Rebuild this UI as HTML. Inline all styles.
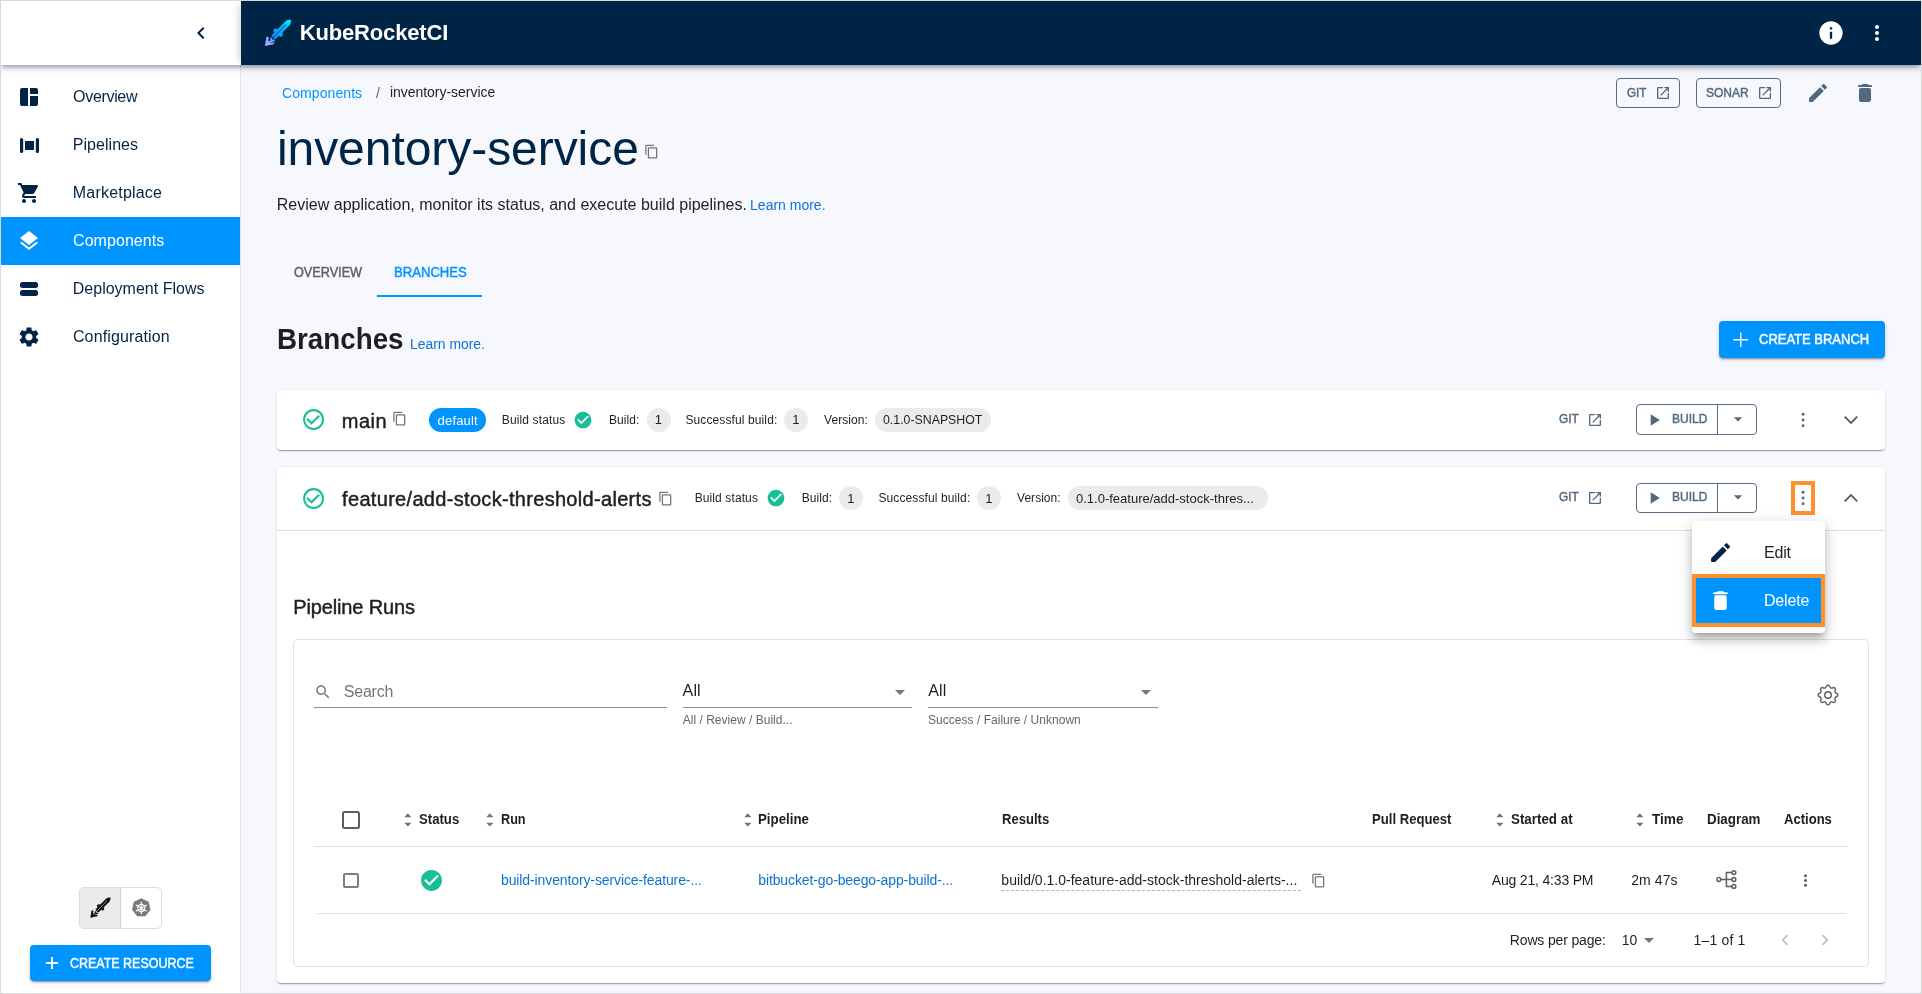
<!DOCTYPE html>
<html lang="en">
<head>
<meta charset="utf-8">
<title>KubeRocketCI - inventory-service</title>
<style>
*{box-sizing:border-box;margin:0;padding:0}
html,body{width:1922px;height:994px;overflow:hidden;background:#f7f8fd}
body{font-family:"Liberation Sans",sans-serif;position:relative;color:#1f1f1f}
.a{position:absolute}
.t{position:absolute;white-space:nowrap;line-height:1;font-weight:400}
.tl{position:absolute;left:0;top:0;width:1922px;height:994px;will-change:transform}
.t{transform-origin:0 50%}
.m{-webkit-text-stroke:.45px currentColor}
.b{font-weight:700}
svg{position:absolute;display:block;overflow:visible}
.card{position:absolute;background:#fff;border-radius:4px;box-shadow:0 2px 1px -1px rgba(0,0,0,.2),0 1px 1px 0 rgba(0,0,0,.14),0 1px 3px 0 rgba(0,0,0,.12)}
.chip{position:absolute;height:24px;border-radius:12px;background:#ebebeb}
.obtn{position:absolute;border:1px solid #566c84;border-radius:4px;height:30px}
.cbtn{position:absolute;background:#0094ff;border-radius:4px;box-shadow:0 3px 1px -2px rgba(0,0,0,.2),0 2px 2px 0 rgba(0,0,0,.14),0 1px 5px 0 rgba(0,0,0,.12)}
.ln{position:absolute;height:1px;background:#e0e0e0}
</style>
</head>
<body>
<!-- sidebar -->
<div class="a" style="left:1px;top:1px;width:240px;height:992px;background:#fff;border-right:1px solid #e2e2e2"></div>
<div class="a" style="left:1px;top:217px;width:239px;height:48px;background:#0094ff"></div>
<!-- top bar -->
<div class="a" style="left:1px;top:1px;width:1920px;height:64px;background:#fff;box-shadow:0 2px 4px -1px rgba(0,30,64,.3),0 4px 5px 0 rgba(0,30,64,.15),0 1px 10px 0 rgba(0,30,64,.13)"></div>
<div class="a" style="left:241px;top:1px;width:1680px;height:64px;background:#002446;box-shadow:-5px 0 8px -4px rgba(0,0,0,.22)"></div>
<!-- sidebar collapse chevron -->
<svg style="left:189px;top:21px" width="24" height="24" viewBox="0 0 24 24"><path fill="#002446" d="M15.41 7.41L14 6l-6 6 6 6 1.41-1.41L10.83 12z"/></svg>
<!-- logo -->
<svg style="left:258px;top:14px" width="40" height="38" viewBox="0 0 40 38"><defs><linearGradient id="lg" x1="0" y1="0" x2="26" y2="0" gradientUnits="userSpaceOnUse"><stop offset="0" stop-color="#00f0ff"/><stop offset=".5" stop-color="#08b4ff"/><stop offset="1" stop-color="#1a8cff"/></linearGradient><linearGradient id="lg2" x1="17" y1="23" x2="7" y2="32" gradientUnits="userSpaceOnUse"><stop offset="0" stop-color="#4a9cff"/><stop offset=".5" stop-color="#8f9fff"/><stop offset="1" stop-color="#c2a6ff"/></linearGradient></defs><g transform="translate(33.1 5.700) rotate(135)"><path fill="url(#lg)" d="M.3 0C1.200 1.300 2.800 2.500 5 2.800L25 2.800 25.500 0 25-2.800 5-2.800C2.800-2.500 1.200-1.300 .3 0Z"/><path fill="url(#lg)" d="M15.600 2.600L17.800 5.200 20.600 4.800 21 2.600ZM14.600-2.600L16.800-5.200 19.600-4.800 20-2.600Z"/><path stroke="#002446" stroke-width=".95" stroke-dasharray="1.150 .65" fill="none" d="M7.200 0H24.800"/></g><path fill="url(#lg2)" d="M6.900 31.900L8.400 22.800 10.800 22.800 10.500 27 12.300 27 12.500 23.500 14.200 23.500 14 25.600 16.800 25.400 16.800 27.200 11.400 28.500 16.400 28.400 15.900 30.200Z"/></svg>
<!-- header right icons -->
<svg style="left:1817px;top:19px" width="28" height="28" viewBox="0 0 24 24"><path fill="#fff" d="M12 2C6.480 2 2 6.480 2 12s4.480 10 10 10 10-4.480 10-10S17.520 2 12 2zm1 15h-2v-6h2v6zm0-8h-2V7h2v2z"/></svg>
<svg style="left:1865px;top:21px" width="24" height="24" viewBox="0 0 24 24"><path fill="#fff" d="M12 8c1.100 0 2-.9 2-2s-.9-2-2-2-2 .9-2 2 .9 2 2 2zm0 2c-1.100 0-2 .9-2 2s.9 2 2 2 2-.9 2-2-.9-2-2-2zm0 6c-1.100 0-2 .9-2 2s.9 2 2 2 2-.9 2-2-.9-2-2-2z"/></svg>
<!-- sidebar icons -->
<svg style="left:20px;top:88px" width="18" height="18" viewBox="0 0 18 18"><path fill="#002446" d="M2 0h6v18H2a2 2 0 0 1-2-2V2a2 2 0 0 1 2-2zM10 0h6a2 2 0 0 1 2 2v4h-8zM10 8h8v8a2 2 0 0 1-2 2h-6z"/></svg>
<svg style="left:19.500px;top:137.500px" width="19" height="15" viewBox="0 0 19 15"><path fill="#002446" d="M1.600 0A1.600 1.600 0 0 1 3.200 1.600v11.800a1.600 1.600 0 0 1-3.200 0V1.600A1.600 1.600 0 0 1 1.600 0zM17.400 0A1.600 1.600 0 0 1 19 1.600v11.800a1.600 1.600 0 0 1-3.200 0V1.600A1.600 1.600 0 0 1 17.400 0zM5 3h9v9H5z"/></svg>
<svg style="left:17px;top:181px" width="24" height="24" viewBox="0 0 24 24"><path fill="#002446" d="M7 18c-1.100 0-1.990.9-1.990 2S5.900 22 7 22s2-.9 2-2-.9-2-2-2zM1 2v2h2l3.600 7.590-1.350 2.450c-.16.280-.25.610-.25.960 0 1.100.9 2 2 2h12v-2H7.420c-.14 0-.25-.11-.25-.25l.03-.12.900-1.630h7.450c.75 0 1.410-.41 1.750-1.030l3.580-6.490c.08-.14.120-.31.120-.48 0-.55-.45-1-1-1H5.210l-.94-2H1zm16 16c-1.100 0-1.990.9-1.990 2s.89 2 1.990 2 2-.9 2-2-.9-2-2-2z"/></svg>
<svg style="left:17px;top:229px" width="24" height="24" viewBox="0 0 24 24"><path fill="#fff" d="M11.990 18.540l-7.370-5.730L3 14.070l9 7 9-7-1.630-1.270-7.380 5.740zM12 16l7.360-5.730L21 9l-9-7-9 7 1.630 1.270L12 16z"/></svg>
<div class="a" style="left:20px;top:282px;width:18px;height:6px;border-radius:2.500px;background:#002446"></div>
<div class="a" style="left:20px;top:290px;width:18px;height:6px;border-radius:2.500px;background:#002446"></div>
<svg style="left:17px;top:325px" width="24" height="24" viewBox="0 0 24 24"><path fill="#002446" d="M19.140 12.940c.04-.3.060-.61.060-.94 0-.32-.02-.64-.07-.94l2.030-1.580c.18-.14.230-.41.120-.61l-1.920-3.320c-.12-.22-.37-.29-.59-.22l-2.390.96c-.5-.38-1.030-.7-1.620-.94l-.36-2.540c-.04-.24-.24-.41-.48-.41h-3.840c-.24 0-.43.170-.47.410l-.36 2.540c-.59.240-1.130.57-1.620.94l-2.390-.96c-.22-.08-.47 0-.59.220L2.740 8.870c-.12.210-.08.470.120.610l2.030 1.580c-.05.300-.09.630-.09.940s.02.640.07.940l-2.030 1.580c-.18.140-.23.410-.12.610l1.920 3.320c.12.220.37.290.59.220l2.390-.96c.5.380 1.030.7 1.620.94l.36 2.540c.05.240.24.410.48.410h3.840c.24 0 .44-.17.470-.41l.36-2.540c.59-.24 1.130-.56 1.620-.94l2.390.96c.22.080.47 0 .59-.22l1.920-3.320c.12-.22.070-.47-.12-.61l-2.010-1.580zM12 15.600c-1.980 0-3.600-1.620-3.600-3.600s1.620-3.600 3.600-3.600 3.600 1.620 3.600 3.600-1.620 3.600-3.600 3.600z"/></svg>
<!-- sidebar bottom toggle -->
<div class="a" style="left:79px;top:887px;width:83px;height:42px;border:1px solid #dcdcdc;border-radius:5px;background:#fff"></div>
<div class="a" style="left:80px;top:888px;width:41px;height:40px;background:#ebebeb;border-right:1px solid #d4d4d4;border-radius:4px 0 0 4px"></div>
<svg style="left:84.57px;top:893.3px" width="30.92" height="29.37" viewBox="0 0 40 38"><g transform="translate(33.1 5.700) rotate(135)"><path fill="#111" d="M.3 0C1.200 1.300 2.800 2.500 5 2.800L25 2.800 25.500 0 25-2.800 5-2.800C2.800-2.500 1.200-1.300 .3 0Z"/><path fill="#111" d="M15.600 2.600L17.800 5.200 20.600 4.800 21 2.600ZM14.600-2.600L16.800-5.200 19.600-4.800 20-2.600Z"/><path stroke="#ebebeb" stroke-width=".95" stroke-dasharray="1.150 .65" fill="none" d="M7.200 0H24.800"/></g><path fill="#111" d="M6.900 31.900L8.400 22.800 10.800 22.800 10.500 27 12.300 27 12.500 23.500 14.200 23.500 14 25.600 16.800 25.400 16.800 27.200 11.400 28.500 16.400 28.400 15.900 30.200Z"/></svg>
<svg style="left:130.500px;top:898px" width="20.500" height="20" viewBox="0 0 20.500 20">
<path fill="#7a7a7a" d="M10.250 .3l7.400 3.560 1.830 8-5.120 6.420H6.140L1.020 11.860l1.830-8z"/>
<g stroke="#fff" stroke-width="1.100" fill="none" stroke-linecap="round"><circle cx="10.250" cy="10" r="3.600"/><path d="M10.250 4.300v11.400M5.300 7.200l9.900 5.700M15.200 7.200l-9.900 5.700"/></g>
<circle cx="10.250" cy="10" r="1.300" fill="#fff"/>
</svg>
<!-- create resource button -->
<div class="cbtn" style="left:30px;top:945px;width:181px;height:36px"></div>
<svg style="left:45px;top:956px" width="14" height="14" viewBox="0 0 14 14"><path stroke="#fff" stroke-width="1.900" d="M7 .9v12.200M.9 7h12.200"/></svg>
<!-- top-right buttons -->
<div class="obtn" style="left:1616px;top:78px;width:64px"></div>
<svg style="left:1655px;top:85px" width="16" height="16" viewBox="0 0 24 24"><path fill="#52687f" d="M19 19H5V5h7V3H5c-1.110 0-2 .9-2 2v14c0 1.100.89 2 2 2h14c1.100 0 2-.9 2-2v-7h-2v7zM14 3v2h3.590l-9.830 9.830 1.410 1.410L19 6.410V10h2V3h-7z"/></svg>
<div class="obtn" style="left:1696px;top:78px;width:85px"></div>
<svg style="left:1757.200px;top:85px" width="16" height="16" viewBox="0 0 24 24"><path fill="#52687f" d="M19 19H5V5h7V3H5c-1.110 0-2 .9-2 2v14c0 1.100.89 2 2 2h14c1.100 0 2-.9 2-2v-7h-2v7zM14 3v2h3.590l-9.830 9.830 1.410 1.410L19 6.410V10h2V3h-7z"/></svg>
<svg style="left:1805.500px;top:80.600px" width="24" height="24" viewBox="0 0 24 24"><path fill="#52687f" d="M3 17.460v3.040c0 .28.220.5.500.5h3.040c.13 0 .26-.05.350-.15L17.810 9.940l-3.750-3.750L3.150 17.100c-.10.100-.15.220-.15.360zM20.710 7.040c.39-.39.39-1.020 0-1.410l-2.340-2.340a.996.996 0 0 0-1.410 0l-1.830 1.830 3.750 3.750 1.830-1.830z"/></svg>
<svg style="left:1853px;top:81px" width="24" height="24" viewBox="0 0 24 24"><path fill="#52687f" d="M6 19c0 1.100.9 2 2 2h8c1.100 0 2-.9 2-2V9c0-1.100-.9-2-2-2H8c-1.100 0-2 .9-2 2v10zM18 4h-2.500l-.71-.71c-.18-.18-.44-.29-.70-.29H9.910c-.26 0-.52.110-.70.290L8.500 4H6c-.55 0-1 .45-1 1s.45 1 1 1h12c.55 0 1-.45 1-1s-.45-1-1-1z"/></svg>
<!-- title copy icon -->
<svg style="left:643.700px;top:144.400px" width="15.200" height="15.200" viewBox="0 0 24 24"><path fill="#757575" d="M16 1H4c-1.100 0-2 .9-2 2v14h2V3h12V1zm3 4H8c-1.100 0-2 .9-2 2v14c0 1.100.9 2 2 2h11c1.100 0 2-.9 2-2V7c0-1.100-.9-2-2-2zm0 16H8V7h11v14z"/></svg>
<!-- tab underline -->
<div class="a" style="left:377px;top:295px;width:105px;height:2px;background:#0094ff"></div>
<!-- create branch -->
<div class="cbtn" style="left:1719px;top:321px;width:166px;height:37px"></div>
<svg style="left:1733px;top:331.500px" width="15.500" height="15.500" viewBox="0 0 15.500 15.500"><path stroke="#fff" stroke-width="1.400" d="M7.750 .4v14.700M.4 7.750h14.700"/></svg>
<!-- card 1 -->
<div class="card" style="left:277px;top:390px;width:1608px;height:60.400px"></div>
<svg style="left:300.900px;top:406.900px" width="25.200" height="25.200" viewBox="0 0 24 24"><path fill="#18be94" d="M16.590 7.580L10 14.170l-3.590-3.580L5 12l5 5 8-8zM12 2C6.480 2 2 6.480 2 12s4.480 10 10 10 10-4.480 10-10S17.520 2 12 2zm0 18c-4.420 0-8-3.580-8-8s3.580-8 8-8 8 3.580 8 8-3.580 8-8 8z"/></svg>
<svg style="left:391.700px;top:411.300px" width="15.200" height="15.200" viewBox="0 0 24 24"><path fill="#757575" d="M16 1H4c-1.100 0-2 .9-2 2v14h2V3h12V1zm3 4H8c-1.100 0-2 .9-2 2v14c0 1.100.9 2 2 2h11c1.100 0 2-.9 2-2V7c0-1.100-.9-2-2-2zm0 16H8V7h11v14z"/></svg>
<div class="chip" style="left:429px;top:408px;width:57px;background:#0094ff"></div>
<svg style="left:573.200px;top:410px" width="20" height="20" viewBox="0 0 24 24"><circle cx="12" cy="12" r="8" fill="#fff"/><path fill="#18be94" d="M12 2C6.480 2 2 6.480 2 12s4.480 10 10 10 10-4.480 10-10S17.520 2 12 2zm-2 15l-5-5 1.410-1.410L10 14.170l7.590-7.590L19 8l-9 9z"/></svg>
<div class="chip" style="left:647px;top:408px;width:23.500px"></div>
<div class="chip" style="left:784px;top:408px;width:24px"></div>
<div class="chip" style="left:875px;top:408px;width:116px"></div>
<svg style="left:1587px;top:412px" width="16" height="16" viewBox="0 0 24 24"><path fill="#52687f" d="M19 19H5V5h7V3H5c-1.110 0-2 .9-2 2v14c0 1.100.89 2 2 2h14c1.100 0 2-.9 2-2v-7h-2v7zM14 3v2h3.590l-9.830 9.830 1.410 1.410L19 6.410V10h2V3h-7z"/></svg>
<div class="obtn" style="left:1636px;top:404px;width:121px;height:30.750px"></div>
<div class="a" style="left:1717px;top:404px;width:1px;height:30px;background:#566c84"></div>
<svg style="left:1643.800px;top:410.300px" width="20" height="20" viewBox="0 0 24 24"><path fill="#52687f" d="M8 5v14l11-7z"/></svg>
<svg style="left:1727.500px;top:408.500px" width="20" height="20" viewBox="0 0 24 24"><path fill="#52687f" d="M7 10l5 5 5-5z"/></svg>
<svg style="left:1798px;top:410.700px" width="10" height="18" viewBox="0 0 10 18"><g fill="#52687f"><circle cx="5.100" cy="3.300" r="1.450"/><circle cx="5.100" cy="9" r="1.450"/><circle cx="5.100" cy="14.700" r="1.450"/></g></svg>
<svg style="left:1843px;top:414px" width="16" height="12" viewBox="0 0 16 12"><path fill="none" stroke="#5c5c5c" stroke-width="1.800" d="M1.700 2.700L8 9l6.300-6.300"/></svg>
<!-- card 2 -->
<div class="card" style="left:277px;top:467px;width:1608px;height:516px"></div>
<div class="ln" style="left:277px;top:530px;width:1608px;background:#dedede"></div>
<svg style="left:300.900px;top:485.900px" width="25.200" height="25.200" viewBox="0 0 24 24"><path fill="#18be94" d="M16.590 7.580L10 14.170l-3.590-3.580L5 12l5 5 8-8zM12 2C6.480 2 2 6.480 2 12s4.480 10 10 10 10-4.480 10-10S17.520 2 12 2zm0 18c-4.420 0-8-3.580-8-8s3.580-8 8-8 8 3.580 8 8-3.580 8-8 8z"/></svg>
<svg style="left:657.600px;top:491px" width="15.200" height="15.200" viewBox="0 0 24 24"><path fill="#757575" d="M16 1H4c-1.100 0-2 .9-2 2v14h2V3h12V1zm3 4H8c-1.100 0-2 .9-2 2v14c0 1.100.9 2 2 2h11c1.100 0 2-.9 2-2V7c0-1.100-.9-2-2-2zm0 16H8V7h11v14z"/></svg>
<svg style="left:765.900px;top:488px" width="20" height="20" viewBox="0 0 24 24"><circle cx="12" cy="12" r="8" fill="#fff"/><path fill="#18be94" d="M12 2C6.480 2 2 6.480 2 12s4.480 10 10 10 10-4.480 10-10S17.520 2 12 2zm-2 15l-5-5 1.410-1.410L10 14.170l7.590-7.590L19 8l-9 9z"/></svg>
<div class="chip" style="left:839px;top:486px;width:24px"></div>
<div class="chip" style="left:977px;top:486px;width:24px"></div>
<div class="chip" style="left:1068px;top:486px;width:200px"></div>
<svg style="left:1587px;top:490px" width="16" height="16" viewBox="0 0 24 24"><path fill="#52687f" d="M19 19H5V5h7V3H5c-1.110 0-2 .9-2 2v14c0 1.100.89 2 2 2h14c1.100 0 2-.9 2-2v-7h-2v7zM14 3v2h3.590l-9.830 9.830 1.410 1.410L19 6.410V10h2V3h-7z"/></svg>
<div class="obtn" style="left:1636px;top:482.500px;width:121px;height:30.750px"></div>
<div class="a" style="left:1717px;top:483px;width:1px;height:30px;background:#566c84"></div>
<svg style="left:1643.800px;top:488.300px" width="20" height="20" viewBox="0 0 24 24"><path fill="#52687f" d="M8 5v14l11-7z"/></svg>
<svg style="left:1727.500px;top:487px" width="20" height="20" viewBox="0 0 24 24"><path fill="#52687f" d="M7 10l5 5 5-5z"/></svg>
<div class="a" style="left:1791px;top:481px;width:24px;height:34px;border:4px solid #ff912c"></div>
<svg style="left:1798px;top:488.700px" width="10" height="18" viewBox="0 0 10 18"><g fill="#52687f"><circle cx="5.100" cy="3.300" r="1.450"/><circle cx="5.100" cy="9" r="1.450"/><circle cx="5.100" cy="14.700" r="1.450"/></g></svg>
<svg style="left:1843px;top:492.100px" width="16" height="12" viewBox="0 0 16 12"><path fill="none" stroke="#5c5c5c" stroke-width="1.800" d="M1.700 9.300L8 3l6.300 6.300"/></svg>
<!-- inner table card -->
<div class="a" style="left:293px;top:639px;width:1576px;height:328px;border:1px solid #e0e0e0;border-radius:5px;background:#fff"></div>
<!-- search -->
<svg style="left:314px;top:683.200px" width="18" height="18" viewBox="0 0 24 24"><path fill="#7b7b7b" d="M15.500 14h-.79l-.28-.27C15.410 12.590 16 11.110 16 9.500 16 5.910 13.090 3 9.500 3S3 5.910 3 9.500 5.910 16 9.500 16c1.610 0 3.090-.59 4.230-1.570l.27.280v.79l5 4.990L20.490 19l-4.990-5zm-6 0C7.010 14 5 11.990 5 9.500S7.010 5 9.500 5 14 7.010 14 9.500 11.990 14 9.500 14z"/></svg>
<div class="ln" style="left:314px;top:707px;width:353px;background:#8c8c8c"></div>
<div class="ln" style="left:683px;top:707px;width:229px;background:#8c8c8c"></div>
<div class="ln" style="left:928px;top:707px;width:230px;background:#8c8c8c"></div>
<svg style="left:888.300px;top:680px" width="24" height="24" viewBox="0 0 24 24"><path fill="#757575" d="M7 10l5 5 5-5z"/></svg>
<svg style="left:1134.100px;top:680px" width="24" height="24" viewBox="0 0 24 24"><path fill="#757575" d="M7 10l5 5 5-5z"/></svg>
<!-- settings gear (outline) -->
<svg style="left:1815.100px;top:681.900px" width="26" height="26" viewBox="0 0 24 24"><g fill="none" stroke="#616161" stroke-width="1.350" stroke-linecap="round" stroke-linejoin="round"><path d="M10.325 4.317c.426-1.756 2.924-1.756 3.350 0a1.724 1.724 0 0 0 2.573 1.066c1.543-.94 3.310.826 2.370 2.370a1.724 1.724 0 0 0 1.065 2.572c1.756.426 1.756 2.924 0 3.350a1.724 1.724 0 0 0-1.066 2.573c.94 1.543-.826 3.310-2.370 2.370a1.724 1.724 0 0 0-2.572 1.065c-.426 1.756-2.924 1.756-3.350 0a1.724 1.724 0 0 0-2.573-1.066c-1.543.94-3.310-.826-2.370-2.370a1.724 1.724 0 0 0-1.065-2.572c-1.756-.426-1.756-2.924 0-3.350a1.724 1.724 0 0 0 1.066-2.573c-.94-1.543.826-3.310 2.370-2.370 1 .608 2.296.070 2.572-1.065z"/><circle cx="12" cy="12" r="3"/></g></svg>
<!-- table header -->
<div class="a" style="left:342px;top:811px;width:18px;height:18px;border:2px solid #5e5e5e;border-radius:2.500px"></div>
<svg style="left:404px;top:813.300px" width="8" height="14" viewBox="0 0 8 14"><path fill="#757575" d="M.2 4.200L3.850 .2 7.500 4.200zM.2 9.700h7.300L3.850 13.600z"/></svg>
<svg style="left:486px;top:813.300px" width="8" height="14" viewBox="0 0 8 14"><path fill="#757575" d="M.2 4.200L3.850 .2 7.500 4.200zM.2 9.700h7.300L3.850 13.600z"/></svg>
<svg style="left:744.200px;top:813.300px" width="8" height="14" viewBox="0 0 8 14"><path fill="#757575" d="M.2 4.200L3.850 .2 7.500 4.200zM.2 9.700h7.300L3.850 13.600z"/></svg>
<svg style="left:1496.200px;top:813.300px" width="8" height="14" viewBox="0 0 8 14"><path fill="#757575" d="M.2 4.200L3.850 .2 7.500 4.200zM.2 9.700h7.300L3.850 13.600z"/></svg>
<svg style="left:1636px;top:813.300px" width="8" height="14" viewBox="0 0 8 14"><path fill="#757575" d="M.2 4.200L3.850 .2 7.500 4.200zM.2 9.700h7.300L3.850 13.600z"/></svg>
<div class="ln" style="left:314px;top:846px;width:1534px"></div>
<!-- table row -->
<div class="a" style="left:343.300px;top:872.500px;width:15.500px;height:15.500px;border:2px solid #7d7d7d;border-radius:2px"></div>
<svg style="left:418.900px;top:868px" width="25" height="25" viewBox="0 0 24 24"><circle cx="12" cy="12" r="8" fill="#fff"/><path fill="#18be94" d="M12 2C6.480 2 2 6.480 2 12s4.480 10 10 10 10-4.480 10-10S17.520 2 12 2zm-2 15l-5-5 1.410-1.410L10 14.170l7.590-7.590L19 8l-9 9z"/></svg>
<div class="a" style="left:1001px;top:890px;width:300px;height:0;border-top:1px dashed #b5b5b5"></div>
<svg style="left:1311px;top:872.800px" width="15.200" height="15.200" viewBox="0 0 24 24"><path fill="#757575" d="M16 1H4c-1.100 0-2 .9-2 2v14h2V3h12V1zm3 4H8c-1.100 0-2 .9-2 2v14c0 1.100.9 2 2 2h11c1.100 0 2-.9 2-2V7c0-1.100-.9-2-2-2zm0 16H8V7h11v14z"/></svg>
<!-- diagram icon -->
<svg style="left:1716.400px;top:869.100px" width="22" height="21" viewBox="0 0 22 21"><g fill="none" stroke="#5f5f5f" stroke-width="1.500"><circle cx="2.800" cy="10.500" r="1.900"/><circle cx="17.900" cy="3.600" r="1.900"/><circle cx="17.900" cy="10.500" r="1.900"/><circle cx="17.900" cy="17.400" r="1.900"/><path d="M4.700 10.500H16M16 3.600h-5.600v13.800H16"/></g></svg>
<svg style="left:1796.400px;top:870.700px" width="19" height="19" viewBox="0 0 24 24"><path fill="#616161" d="M12 8c1.100 0 2-.9 2-2s-.9-2-2-2-2 .9-2 2 .9 2 2 2zm0 2c-1.100 0-2 .9-2 2s.9 2 2 2 2-.9 2-2-.9-2-2-2zm0 6c-1.100 0-2 .9-2 2s.9 2 2 2 2-.9 2-2-.9-2-2-2z"/></svg>
<div class="ln" style="left:317px;top:913px;width:1529px"></div>
<!-- pagination -->
<svg style="left:1637.300px;top:927.800px" width="24" height="24" viewBox="0 0 24 24"><path fill="#757575" d="M7 10l5 5 5-5z"/></svg>
<svg style="left:1774.300px;top:928.800px" width="22" height="22" viewBox="0 0 24 24"><path fill="#c2c2c2" d="M15.410 7.410L14 6l-6 6 6 6 1.410-1.410L10.830 12z"/></svg>
<svg style="left:1813.900px;top:928.800px" width="22" height="22" viewBox="0 0 24 24"><path fill="#c2c2c2" d="M10 6L8.590 7.410 13.170 12l-4.580 4.590L10 18l6-6z"/></svg>
<!-- popup menu -->
<div class="a" style="left:1692px;top:521px;width:133px;height:112px;background:#fff;border-radius:4px;box-shadow:0 5px 5px -3px rgba(0,0,0,.2),0 8px 10px 1px rgba(0,0,0,.14),0 3px 14px 2px rgba(0,0,0,.12)"></div>
<svg style="left:1708.400px;top:539.500px" width="25.200" height="25.200" viewBox="0 0 24 24"><path fill="#002446" d="M3 17.460v3.040c0 .28.220.5.500.5h3.040c.13 0 .26-.05.350-.15L17.810 9.940l-3.750-3.750L3.150 17.100c-.10.100-.15.220-.15.360zM20.710 7.040c.39-.39.39-1.020 0-1.410l-2.340-2.340a.996.996 0 0 0-1.410 0l-1.830 1.830 3.750 3.750 1.830-1.830z"/></svg>
<div class="a" style="left:1692px;top:574.200px;width:133px;height:52.700px;background:#0094ff;border:4px solid #ff912c"></div>
<svg style="left:1708px;top:587.900px" width="25" height="25" viewBox="0 0 24 24"><path fill="#fff" d="M6 19c0 1.100.9 2 2 2h8c1.100 0 2-.9 2-2V9c0-1.100-.9-2-2-2H8c-1.100 0-2 .9-2 2v10zM18 4h-2.500l-.71-.71c-.18-.18-.44-.29-.70-.29H9.910c-.26 0-.52.110-.70.290L8.500 4H6c-.55 0-1 .45-1 1s.45 1 1 1h12c.55 0 1-.45 1-1s-.45-1-1-1z"/></svg>

<div class="tl">
<span class="t b" style="left:299.65px;top:22.00px;font-size:22px;letter-spacing:-0.152px;color:#fff">KubeRocketCI</span>
<span class="t" style="left:73.09px;top:89.00px;font-size:16px;letter-spacing:-0.323px;color:#002446">Overview</span>
<span class="t" style="left:72.80px;top:137.00px;font-size:16px;letter-spacing:0.034px;color:#002446">Pipelines</span>
<span class="t" style="left:72.80px;top:185.00px;font-size:16px;letter-spacing:0.199px;color:#002446">Marketplace</span>
<span class="t" style="left:73.02px;top:233.00px;font-size:16px;letter-spacing:0.059px;color:#fff">Components</span>
<span class="t" style="left:72.80px;top:281.00px;font-size:16px;letter-spacing:0.003px;color:#002446">Deployment Flows</span>
<span class="t" style="left:72.92px;top:329.00px;font-size:16px;letter-spacing:0.135px;color:#002446">Configuration</span>
<span class="t m" style="left:70.37px;top:956.01px;font-size:14px;transform:scaleX(0.8904);color:#fff">CREATE RESOURCE</span>
<span class="t" style="left:282.04px;top:86.01px;font-size:14px;letter-spacing:0.078px;color:#0094ff">Components</span>
<span class="t" style="left:376.07px;top:86.01px;font-size:14px;color:#5d5d5d">/</span>
<span class="t" style="left:389.89px;top:85.01px;font-size:14px;letter-spacing:-0.024px;color:#1f1f1f">inventory-service</span>
<span class="t m" style="left:1627.00px;top:86.00px;font-size:13px;transform:scaleX(0.8951);color:#52687f">GIT</span>
<span class="t m" style="left:1706.32px;top:86.00px;font-size:13px;transform:scaleX(0.9217);color:#52687f">SONAR</span>
<span class="t" style="left:276.89px;top:125.01px;font-size:48px;letter-spacing:-0.050px;color:#002446">inventory-service</span>
<span class="t" style="left:276.79px;top:197.00px;font-size:16px;letter-spacing:0.008px;color:#1f1f1f">Review application, monitor its status, and execute build pipelines.</span>
<span class="t" style="left:750.08px;top:198.01px;font-size:14px;letter-spacing:-0.002px;color:#0d72d6">Learn more.</span>
<span class="t m" style="left:293.74px;top:265.01px;font-size:14px;transform:scaleX(0.9048);color:#616161">OVERVIEW</span>
<span class="t m" style="left:393.87px;top:265.01px;font-size:14px;transform:scaleX(0.9355);color:#0094ff">BRANCHES</span>
<span class="t b" style="left:277.02px;top:324.01px;font-size:29.5px;transform:scaleX(0.9413);color:#1f1f1f">Branches</span>
<span class="t" style="left:410.43px;top:337.01px;font-size:14px;transform:scaleX(0.9921);color:#0d72d6">Learn more.</span>
<span class="t m" style="left:1759.05px;top:332.01px;font-size:14px;transform:scaleX(0.9277);color:#fff">CREATE BRANCH</span>
<span class="t m" style="left:341.74px;top:411.01px;font-size:20px;letter-spacing:0.497px;color:#1f1f1f">main</span>
<span class="t" style="left:437.54px;top:414.00px;font-size:13px;letter-spacing:0.192px;color:#fff">default</span>
<span class="t" style="left:501.75px;top:414.01px;font-size:12px;letter-spacing:0.135px;color:#1f1f1f">Build status</span>
<span class="t" style="left:609.01px;top:414.01px;font-size:12px;letter-spacing:0.045px;color:#1f1f1f">Build:</span>
<span class="t" style="left:654.86px;top:413.00px;font-size:13px;color:#1f1f1f">1</span>
<span class="t" style="left:685.44px;top:414.01px;font-size:12px;letter-spacing:0.110px;color:#1f1f1f">Successful build:</span>
<span class="t" style="left:792.22px;top:413.00px;font-size:13px;color:#1f1f1f">1</span>
<span class="t" style="left:824.03px;top:414.01px;font-size:12px;letter-spacing:0.080px;color:#1f1f1f">Version:</span>
<span class="t" style="left:882.57px;top:413.00px;font-size:13px;transform:scaleX(0.9486);color:#1f1f1f">0.1.0-SNAPSHOT</span>
<span class="t m" style="left:1558.89px;top:412.00px;font-size:13px;transform:scaleX(0.9087);color:#52687f">GIT</span>
<span class="t m" style="left:1671.97px;top:412.00px;font-size:13px;transform:scaleX(0.9249);color:#52687f">BUILD</span>
<span class="t m" style="left:342.12px;top:489.01px;font-size:20px;letter-spacing:0.312px;color:#1f1f1f">feature/add-stock-threshold-alerts</span>
<span class="t" style="left:694.70px;top:492.01px;font-size:12px;letter-spacing:0.106px;color:#1f1f1f">Build status</span>
<span class="t" style="left:801.75px;top:492.01px;font-size:12px;letter-spacing:0.083px;color:#1f1f1f">Build:</span>
<span class="t" style="left:847.22px;top:492.00px;font-size:13px;color:#1f1f1f">1</span>
<span class="t" style="left:878.44px;top:492.01px;font-size:12px;letter-spacing:0.108px;color:#1f1f1f">Successful build:</span>
<span class="t" style="left:985.22px;top:492.00px;font-size:13px;color:#1f1f1f">1</span>
<span class="t" style="left:1017.03px;top:492.01px;font-size:12px;letter-spacing:0.034px;color:#1f1f1f">Version:</span>
<span class="t" style="left:1075.98px;top:492.00px;font-size:13px;letter-spacing:0.003px;color:#1f1f1f">0.1.0-feature/add-stock-thres...</span>
<span class="t m" style="left:1558.89px;top:490.00px;font-size:13px;transform:scaleX(0.9087);color:#52687f">GIT</span>
<span class="t m" style="left:1671.97px;top:490.00px;font-size:13px;transform:scaleX(0.9249);color:#52687f">BUILD</span>
<span class="t" style="left:1763.94px;top:545.00px;font-size:16px;letter-spacing:-0.156px;color:#1f1f1f">Edit</span>
<span class="t" style="left:1763.92px;top:593.00px;font-size:16px;letter-spacing:-0.138px;color:#fff">Delete</span>
<span class="t m" style="left:293.21px;top:597.01px;font-size:20px;letter-spacing:-0.131px;color:#1f1f1f">Pipeline Runs</span>
<span class="t" style="left:343.70px;top:684.00px;font-size:16px;letter-spacing:-0.188px;color:#757575">Search</span>
<span class="t" style="left:682.61px;top:683.00px;font-size:16px;letter-spacing:0.118px;color:#1f1f1f">All</span>
<span class="t" style="left:682.70px;top:714.01px;font-size:12px;letter-spacing:0.021px;color:#666">All / Review / Build...</span>
<span class="t" style="left:928.31px;top:683.00px;font-size:16px;letter-spacing:0.080px;color:#1f1f1f">All</span>
<span class="t" style="left:928.00px;top:714.01px;font-size:12px;letter-spacing:0.028px;color:#666">Success / Failure / Unknown</span>
<span class="t b" style="left:418.52px;top:812.01px;font-size:14px;transform:scaleX(0.9400);color:#1f1f1f">Status</span>
<span class="t b" style="left:500.97px;top:812.01px;font-size:14px;transform:scaleX(0.9040);color:#1f1f1f">Run</span>
<span class="t b" style="left:757.99px;top:812.01px;font-size:14px;transform:scaleX(0.9493);color:#1f1f1f">Pipeline</span>
<span class="t b" style="left:1001.56px;top:812.01px;font-size:14px;transform:scaleX(0.9320);color:#1f1f1f">Results</span>
<span class="t b" style="left:1372.30px;top:812.01px;font-size:14px;transform:scaleX(0.9370);color:#1f1f1f">Pull Request</span>
<span class="t b" style="left:1511.43px;top:812.01px;font-size:14px;transform:scaleX(0.9538);color:#1f1f1f">Started at</span>
<span class="t b" style="left:1651.81px;top:812.01px;font-size:14px;transform:scaleX(0.9722);color:#1f1f1f">Time</span>
<span class="t b" style="left:1707.00px;top:812.01px;font-size:14px;transform:scaleX(0.9549);color:#1f1f1f">Diagram</span>
<span class="t b" style="left:1784.12px;top:812.01px;font-size:14px;transform:scaleX(0.9323);color:#1f1f1f">Actions</span>
<span class="t" style="left:501.00px;top:873.01px;font-size:14px;letter-spacing:-0.112px;color:#0d72d6">build-inventory-service-feature-...</span>
<span class="t" style="left:758.24px;top:873.01px;font-size:14px;letter-spacing:-0.114px;color:#0d72d6">bitbucket-go-beego-app-build-...</span>
<span class="t" style="left:1001.36px;top:873.01px;font-size:14px;letter-spacing:0.005px;color:#1f1f1f">build/0.1.0-feature-add-stock-threshold-alerts-...</span>
<span class="t" style="left:1491.77px;top:873.01px;font-size:14px;letter-spacing:-0.180px;color:#1f1f1f">Aug 21, 4:33 PM</span>
<span class="t" style="left:1631.26px;top:873.01px;font-size:14px;letter-spacing:0.079px;color:#1f1f1f">2m 47s</span>
<span class="t" style="left:1509.83px;top:933.01px;font-size:14px;letter-spacing:-0.156px;color:#1f1f1f">Rows per page:</span>
<span class="t" style="left:1621.64px;top:933.01px;font-size:14px;letter-spacing:0.179px;color:#1f1f1f">10</span>
<span class="t" style="left:1693.54px;top:933.01px;font-size:14px;letter-spacing:0.167px;color:#1f1f1f">1–1 of 1</span>
</div>
<!-- page frame -->
<div class="a" style="left:0;top:0;width:1922px;height:994px;border:1px solid #d9d9d9;pointer-events:none"></div>
</body>
</html>
